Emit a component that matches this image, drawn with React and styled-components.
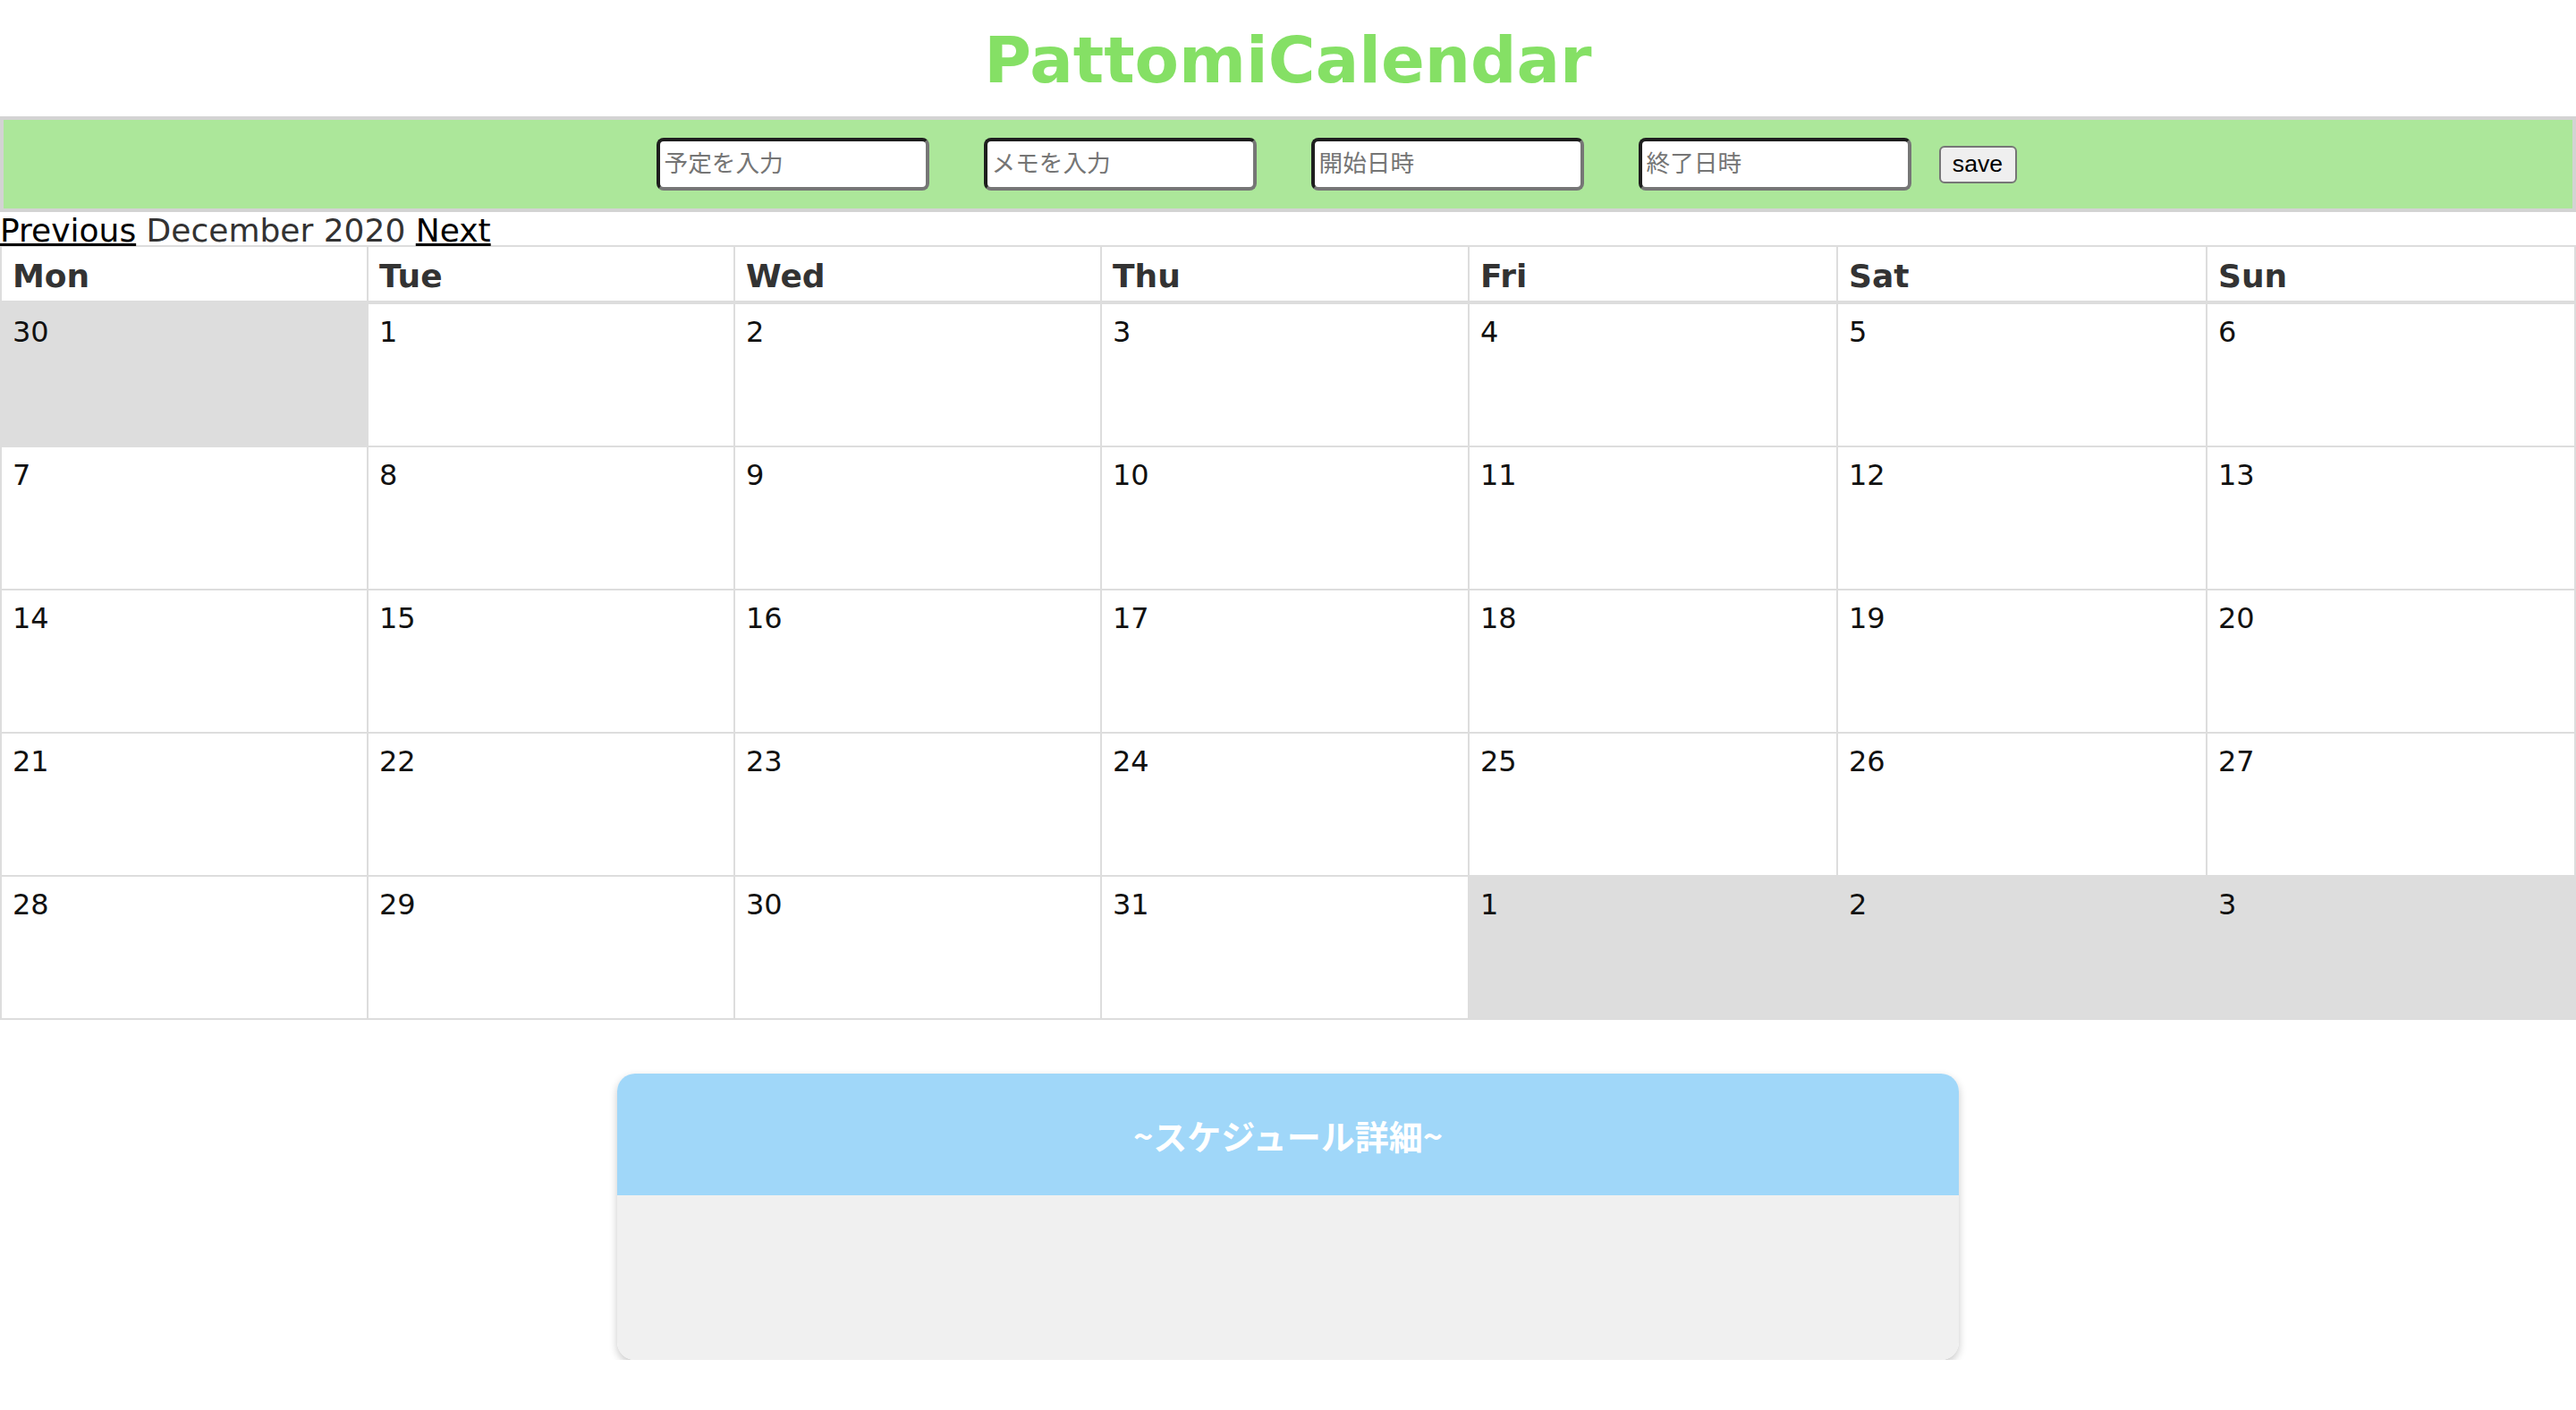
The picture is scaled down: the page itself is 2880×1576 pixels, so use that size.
import React from 'react';
import styled, { createGlobalStyle } from 'styled-components';

const GlobalStyle = createGlobalStyle`
  body {
    margin: 0;
    font-family: 'DejaVu Sans', 'Noto Sans CJK JP', sans-serif;
    font-size: 36px;
    color: #333;
    background: #fff;
  }
`;

const Title = styled.h1`
  margin: 25px 0 21px;
  font-size: 72px;
  font-weight: bold;
  color: #85e065;
  text-align: center;
  line-height: normal;
`;

const Toolbar = styled.form`
  display: flex;
  align-items: center;
  justify-content: center;
  height: 107px;
  box-sizing: border-box;
  padding-left: 108px;
  background-color: #ace79a;
  border: 4px solid #d3d3d3;
`;

const TextInput = styled.input`
  width: 305px;
  height: 59px;
  box-sizing: border-box;
  margin-right: 61px;
  padding: 0 5px;
  font-family: 'Liberation Sans', 'Noto Sans CJK JP', sans-serif;
  font-size: 26.67px;
  background: #fff;
  border: 4px solid;
  border-color: #1e1e1e #767676 #767676 #1e1e1e;
  border-radius: 8px;
  outline: none;

  &:last-of-type {
    margin-right: 31px;
  }

  &::placeholder {
    color: #757575;
  }
`;

const SaveButton = styled.button`
  width: 87px;
  height: 42px;
  box-sizing: border-box;
  padding: 0 10px;
  font-family: 'Liberation Sans', sans-serif;
  font-size: 26.67px;
  color: #000;
  background-color: #efefef;
  border: 2px solid #767676;
  border-radius: 6px;
`;

const MonthNav = styled.div`
  height: 37px;
  line-height: normal;
  white-space: nowrap;
`;

const NavLink = styled.a`
  color: #000;
  text-decoration: underline;
  cursor: pointer;
`;

const Grid = styled.div`
  display: grid;
  grid-template-columns: 408fr 408fr 408fr 409fr 410fr 411fr 410fr;
  gap: 2px;
  padding: 2px;
  background-color: #ddd;
`;

const HeadCell = styled.div`
  height: 60px;
  box-sizing: border-box;
  margin-bottom: 2px;
  padding: 12px 12px 0;
  font-weight: bold;
  color: #333;
  background: #fff;
`;

const DayCell = styled.div`
  height: 158px;
  box-sizing: border-box;
  padding: 12px 12px 0;
  font-size: 32px;
  color: #111;
  background-color: ${(p) => (p.$outside ? '#ddd' : '#fff')};
`;

const Card = styled.section`
  width: 1500px;
  margin: 60px auto 0;
  border-radius: 20px;
  overflow: hidden;
  box-shadow: 0 4px 10px rgba(0, 0, 0, 0.22);
`;

const CardHeader = styled.h3`
  margin: 0;
  height: 136px;
  display: flex;
  align-items: center;
  justify-content: center;
  font-family: 'Noto Sans CJK JP', sans-serif;
  font-size: 38px;
  font-weight: bold;
  color: #fff;
  background-color: #a0d7f9;
`;

const CardBody = styled.div`
  height: 184px;
  background-color: #f0f0f0;
`;

const WEEKDAYS = ['Mon', 'Tue', 'Wed', 'Thu', 'Fri', 'Sat', 'Sun'];

// Dec 2020 starts on a Tuesday, so the grid opens with Nov 30
const buildDays = () => {
  const days = [{ n: 30, outside: true }];
  for (let d = 1; d <= 31; d++) days.push({ n: d, outside: false });
  for (let d = 1; d <= 3; d++) days.push({ n: d, outside: true });
  return days;
};

const App = () => {
  const days = buildDays();

  return (
    <>
      <GlobalStyle />
      <Title>PattomiCalendar</Title>
      <Toolbar onSubmit={(e) => e.preventDefault()}>
        <TextInput type="text" placeholder="予定を入力" />
        <TextInput type="text" placeholder="メモを入力" />
        <TextInput type="text" placeholder="開始日時" />
        <TextInput type="text" placeholder="終了日時" />
        <SaveButton type="button">save</SaveButton>
      </Toolbar>
      <MonthNav>
        <NavLink>Previous</NavLink> December 2020 <NavLink>Next</NavLink>
      </MonthNav>
      <Grid>
        {WEEKDAYS.map((w) => (
          <HeadCell key={w}>{w}</HeadCell>
        ))}
        {days.map((d, i) => (
          <DayCell key={i} $outside={d.outside}>
            {d.n}
          </DayCell>
        ))}
      </Grid>
      <Card>
        <CardHeader>~スケジュール詳細~</CardHeader>
        <CardBody />
      </Card>
    </>
  );
};

export default App;
